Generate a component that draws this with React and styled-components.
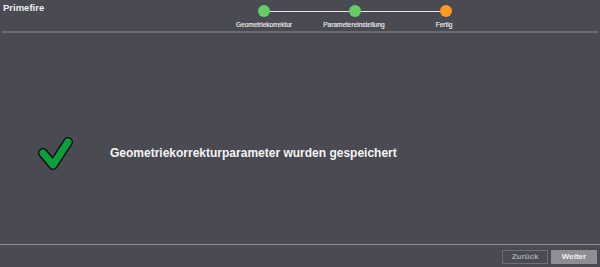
import React from 'react';
import styled, { createGlobalStyle } from 'styled-components';

const GlobalStyle = createGlobalStyle`
  html, body {
    margin: 0;
    padding: 0;
    background: #4a4a53;
  }
  body {
    font-family: "Liberation Sans", Arial, sans-serif;
  }
`

const steps = [
  { label: 'Geometriekorrektur', done: true },
  { label: 'Parametereinstellung', done: true },
  { label: 'Fertig', done: false },
];

const App = () => {
  return (
    <Page>
      <GlobalStyle />
      <Header>
        <Title>Primefire</Title>
        <Stepper>
          <DotRow>
            {steps.map((s, i) => (
              <React.Fragment key={s.label}>
                {i > 0 && <Connector />}
                <Dot $done={s.done} />
              </React.Fragment>
            ))}
          </DotRow>
          <LabelRow>
            {steps.map(s => (
              <StepLabel key={s.label}>{s.label}</StepLabel>
            ))}
          </LabelRow>
        </Stepper>
      </Header>
      <TopRule />
      <Main>
        <MessageRow>
          <CheckIcon viewBox="0 0 36 36">
            <path d="M5 18 L15 30 L30 7" fill="none" stroke="#111" strokeWidth="10" strokeLinecap="round" strokeLinejoin="round" />
            <path d="M5 18 L15 30 L30 7" fill="none" stroke="#0b9e3c" strokeWidth="7" strokeLinecap="round" strokeLinejoin="round" />
          </CheckIcon>
          <Message>Geometriekorrekturparameter wurden gespeichert</Message>
        </MessageRow>
      </Main>
      <BottomRule />
      <Footer>
        <Button>Zurück</Button>
        <Button $primary>Weiter</Button>
      </Footer>
    </Page>
  )
}

const Page = styled.div`
  width: 600px;
  height: 267px;
  display: flex;
  flex-direction: column;
  background: #4a4a53;
  overflow: hidden;
`
const Header = styled.div`
  height: 31px;
  display: flex;
  align-items: flex-start;
`
const Title = styled.div`
  flex: 0 0 216px;
  padding: 2px 0 0 3px;
  color: #f0f0f0;
  font-size: 9.5px;
  font-weight: bold;
`
const Stepper = styled.div`
  width: 272px;
  display: flex;
  flex-direction: column;
`
const DotRow = styled.div`
  display: flex;
  align-items: center;
  padding: 5px 39px 0 39px;
`
const Dot = styled.div`
  width: 12px;
  height: 12px;
  border-radius: 50%;
  flex: 0 0 12px;
  background: ${p => (p.$done ? '#66cc66' : '#ff9922')};
`
const Connector = styled.div`
  flex: 1;
  height: 1px;
  background: #e6e6e6;
`
const LabelRow = styled.div`
  display: flex;
  margin-top: 4px;
`
const StepLabel = styled.div`
  flex: 0 0 90px;
  text-align: center;
  color: #ececec;
  font-size: 6.5px;
  white-space: nowrap;
  -webkit-text-stroke: 0.15px #ececec;
`
const TopRule = styled.div`
  height: 2px;
  margin: 0 2px;
  background: #6a6a72;
`
const Main = styled.div`
  flex: 1;
  padding-top: 102px;
`
const MessageRow = styled.div`
  display: flex;
  align-items: center;
  padding-left: 38px;
  gap: 36px;
`
const CheckIcon = styled.svg`
  width: 36px;
  height: 36px;
  flex: 0 0 36px;
`
const Message = styled.div`
  color: #f4f4f4;
  font-size: 12px;
  font-weight: bold;
`
const BottomRule = styled.div`
  height: 1px;
  background: #8c8c92;
`
const Footer = styled.div`
  height: 22px;
  display: flex;
  justify-content: flex-end;
  align-items: flex-start;
  gap: 3px;
  padding: 5px 3px 0 0;
  box-sizing: border-box;
`
const Button = styled.button`
  width: 46px;
  height: 14px;
  padding: 0;
  font-family: "Liberation Sans", Arial, sans-serif;
  font-size: 8px;
  font-weight: bold;
  border: 1px solid ${p => (p.$primary ? '#8e8e94' : '#6e6e76')};
  background: ${p => (p.$primary ? '#8e8e94' : '#4a4a53')};
  color: ${p => (p.$primary ? '#f0f0f0' : '#a8a8b0')};
  line-height: 12px;
`

export default App
